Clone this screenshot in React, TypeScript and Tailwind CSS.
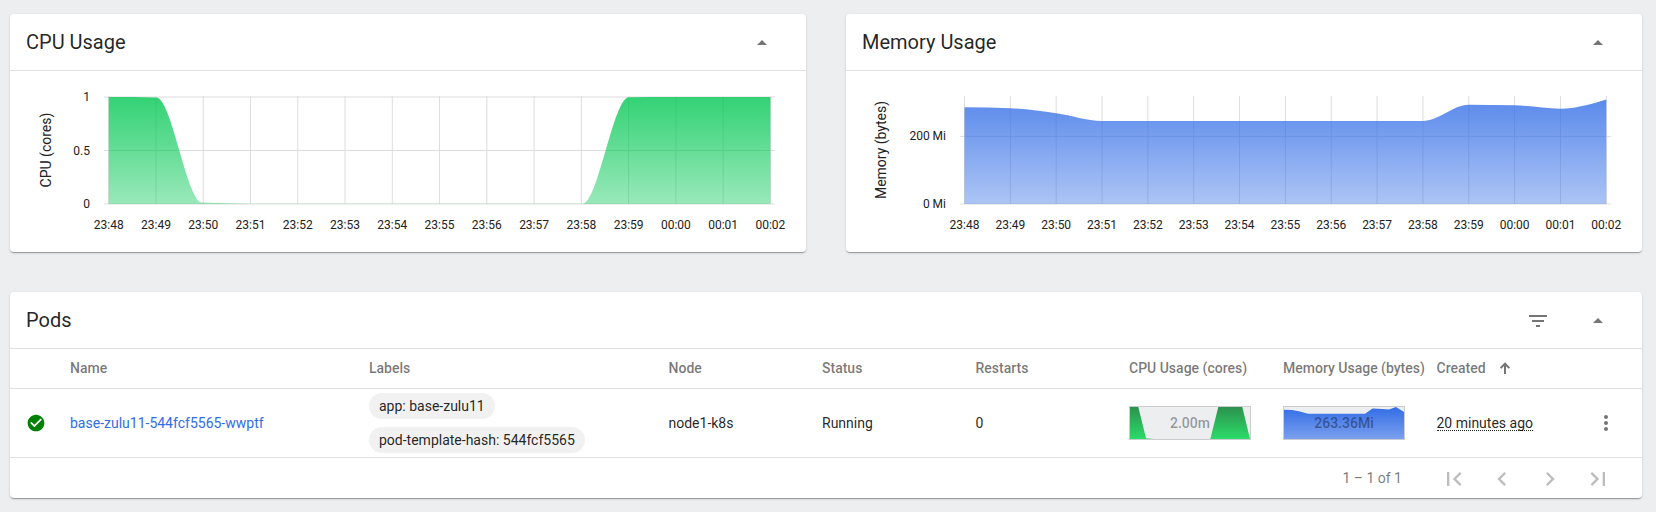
import type { ReactNode } from "react";

type Point = [number, number];

const TIMES = [
  "23:48", "23:49", "23:50", "23:51", "23:52", "23:53", "23:54", "23:55",
  "23:56", "23:57", "23:58", "23:59", "00:00", "00:01", "00:02",
];

/** Monotone cubic interpolation through the given points. */
function monotonePath(points: Point[]): string {
  const n = points.length;
  const slopes: number[] = [];
  for (let i = 0; i < n - 1; i++) {
    slopes.push((points[i + 1][1] - points[i][1]) / (points[i + 1][0] - points[i][0]));
  }
  const tangents = points.map((_, i) => {
    if (i === 0 || i === n - 1) return 0;
    const h0 = points[i][0] - points[i - 1][0];
    const h1 = points[i + 1][0] - points[i][0];
    const s0 = slopes[i - 1];
    const s1 = slopes[i];
    const p = (s0 * h1 + s1 * h0) / (h0 + h1);
    return (Math.sign(s0) + Math.sign(s1)) * Math.min(Math.abs(s0), Math.abs(s1), 0.5 * Math.abs(p));
  });
  tangents[0] = (3 * slopes[0] - tangents[1]) / 2;
  tangents[n - 1] = (3 * slopes[n - 2] - tangents[n - 2]) / 2;
  let d = `M${points[0][0]},${points[0][1]}`;
  for (let i = 0; i < n - 1; i++) {
    const [x0, y0] = points[i];
    const [x1, y1] = points[i + 1];
    const dx = (x1 - x0) / 3;
    d += `C${x0 + dx},${y0 + dx * tangents[i]},${x1 - dx},${y1 - dx * tangents[i + 1]},${x1},${y1}`;
  }
  return d;
}

function Icon({ path, size = 24 }: { path: string; size?: number }) {
  return (
    <svg width={size} height={size} viewBox="0 0 24 24" fill="currentColor" className="block shrink-0">
      <path d={path} />
    </svg>
  );
}

const ICONS = {
  dropUp: "M7 14l5-5 5 5z",
  filter: "M10 18h4v-2h-4v2zM3 6v2h18V6H3zm3 7h12v-2H6v2z",
  check:
    "M12 2C6.48 2 2 6.48 2 12s4.48 10 10 10 10-4.48 10-10S17.52 2 12 2zm-2 15l-5-5 1.41-1.41L10 14.17l7.59-7.59L19 8l-9 9z",
  more:
    "M12 8c1.1 0 2-.9 2-2s-.9-2-2-2-2 .9-2 2 .9 2 2 2zm0 2c-1.1 0-2 .9-2 2s.9 2 2 2 2-.9 2-2-.9-2-2-2zm0 6c-1.1 0-2 .9-2 2s.9 2 2 2 2-.9 2-2-.9-2-2-2z",
  first: "M18.41 16.59L13.82 12l4.59-4.59L17 6l-6 6 6 6zM6 6h2v12H6z",
  prev: "M15.41 7.41L14 6l-6 6 6 6 1.41-1.41L10.83 12z",
  next: "M10 6L8.59 7.41 13.17 12l-4.58 4.59L10 18l6-6z",
  last: "M5.59 7.41L10.18 12l-4.59 4.59L7 18l6-6-6-6zM16 6h2v12h-2z",
};

function Card({ title, actions, children }: { title: string; actions?: ReactNode; children: ReactNode }) {
  return (
    <section className="flex flex-col rounded-[4px] bg-white shadow-[0_2px_1px_-1px_rgba(0,0,0,0.2),0_1px_1px_0_rgba(0,0,0,0.14),0_1px_3px_0_rgba(0,0,0,0.12)]">
      <header className="flex h-[57px] items-center justify-between border-b border-[#dfdfdf] pl-4 pr-8">
        <h2 className="text-xl leading-7">{title}</h2>
        <div className="flex gap-9 pt-0.5 text-black/54">
          {actions}
          <Icon path={ICONS.dropUp} />
        </div>
      </header>
      {children}
    </section>
  );
}

interface ChartProps {
  id: string;
  label: string;
  labelX: number;
  color: string;
  start: number;
  end: number;
  gridStart: number;
  gridEnd: number;
  ticks: { y: number; text: string }[];
  points: Point[];
}

function AreaChart({ id, label, labelX, color, start, end, gridStart, gridEnd, ticks, points }: ChartProps) {
  const step = (end - start) / (TIMES.length - 1);
  const bottom = 133;
  return (
    <svg width="796" height="181" viewBox="0 0 796 181" className="block fill-[#212121] text-[12px]">
      <defs>
        <linearGradient id={id} x1="0" y1="0" x2="0" y2="1">
          <stop offset="0" stopColor={color} stopOpacity="0.8" />
          <stop offset="1" stopColor={color} stopOpacity="0.4" />
        </linearGradient>
      </defs>
      <g stroke="#dddddd">
        {ticks.map((t) => (
          <line key={t.text} x1={gridStart} x2={gridEnd} y1={t.y} y2={t.y} />
        ))}
        {TIMES.map((t, i) => (
          <line key={t} x1={start + i * step} x2={start + i * step} y1="25" y2={bottom} />
        ))}
      </g>
      <path d={`${monotonePath(points)}L${end},${bottom}L${start},${bottom}Z`} fill={`url(#${id})`} />
      {ticks.map((t) => (
        <text key={t.text} x={gridStart - 14} y={t.y + 4} textAnchor="end">
          {t.text}
        </text>
      ))}
      {TIMES.map((t, i) => (
        <text key={t} x={start + i * step} y="158" textAnchor="middle">
          {t}
        </text>
      ))}
      <text transform={`translate(${labelX},79) rotate(-90)`} textAnchor="middle" className="text-[14px]">
        {label}
      </text>
    </svg>
  );
}

function Sparkline({ id, from, to, d, text }: { id: string; from: string; to: string; d: string; text: string }) {
  return (
    <div className="relative h-[34px] w-[122px] border border-[#cbcccd] bg-[#edeef0]">
      <svg width="120" height="32" viewBox="0 0 120 32" className="block">
        <defs>
          <linearGradient id={id} x1="0" y1="0" x2="0" y2="1">
            <stop offset="0" stopColor={from} />
            <stop offset="1" stopColor={to} />
          </linearGradient>
        </defs>
        <path d={d} fill={`url(#${id})`} />
      </svg>
      <span className="absolute inset-0 flex items-center justify-center font-medium text-black/38">{text}</span>
    </div>
  );
}

function Chip({ children }: { children: ReactNode }) {
  return <span className="flex h-[26px] items-center rounded-full bg-[#f1f1f1] px-2.5">{children}</span>;
}

const ROW = "grid grid-cols-[60px_299px_299.5px_153.5px_153.5px_153.5px_154px_153.5px_1fr] items-center";

const CPU_POINTS: Point[] = [
  [98.7, 26], [146.4, 26.4], [192.3, 131.6], [240, 132.7], [287, 132.8], [572.3, 132.8],
  [618.8, 26.3], [666, 26], [760.4, 26],
];

const MEMORY_POINTS: Point[] = [
  [118.5, 36.3], [164.3, 37.3], [210.2, 42.3], [256, 50], [302, 50], [576.8, 50],
  [622.7, 33.7], [668.5, 34.3], [714.4, 37.7], [760.3, 28.5],
];

export default function App() {
  return (
    <main className="flex h-[512px] flex-col gap-10 bg-[#edeef0] pl-2.5 pr-3.5 pt-3.5 font-['Roboto',sans-serif] text-sm text-black/87">
      <div className="grid grid-cols-2 gap-10">
        <Card title="CPU Usage">
          <AreaChart
            id="cpu"
            label="CPU (cores)"
            labelX={41}
            color="#00c752"
            start={98.7}
            end={760.4}
            gridStart={94}
            gridEnd={765}
            ticks={[{ y: 26, text: "1" }, { y: 79.5, text: "0.5" }, { y: 133, text: "0" }]}
            points={CPU_POINTS}
          />
        </Card>
        <Card title="Memory Usage">
          <AreaChart
            id="memory"
            label="Memory (bytes)"
            labelX={40}
            color="#326de6"
            start={118.5}
            end={760.3}
            gridStart={114}
            gridEnd={765}
            ticks={[{ y: 65.4, text: "200 Mi" }, { y: 133, text: "0 Mi" }]}
            points={MEMORY_POINTS}
          />
        </Card>
      </div>

      <Card title="Pods" actions={<Icon path={ICONS.filter} />}>
        <div className={`${ROW} h-10 border-b border-[#dfdfdf] pb-px font-medium text-black/54`}>
          <span />
          <span>Name</span>
          <span>Labels</span>
          <span>Node</span>
          <span>Status</span>
          <span>Restarts</span>
          <span className="whitespace-nowrap">CPU Usage (cores)</span>
          <span className="whitespace-nowrap">Memory Usage (bytes)</span>
          <span className="flex items-center gap-[13px]">
            Created
            <svg width="12" height="12" viewBox="0 0 12 12" className="block" fill="none" stroke="currentColor" strokeWidth="2">
              <path d="M6 12V2M1.6 6.1L6 1.7L10.4 6.1" />
            </svg>
          </span>
        </div>
        <div className={`${ROW} h-[69px] border-b border-[#dfdfdf]`}>
          <span className="pl-4 text-[#008000]">
            <Icon path={ICONS.check} size={20} />
          </span>
          <a className="text-[#326de6]">base-zulu11-544fcf5565-wwptf</a>
          <div className="flex flex-col items-start gap-2">
            <Chip>app: base-zulu11</Chip>
            <Chip>pod-template-hash: 544fcf5565</Chip>
          </div>
          <span>node1-k8s</span>
          <span>Running</span>
          <span>0</span>
          <Sparkline
            id="cpu-spark"
            from="#2c924e"
            to="#2bdb69"
            text="2.00m"
            d="M0 0H8.3L16 31.2L24 32H0ZM80.3 32L88.3 0H112.3L120 32Z"
          />
          <Sparkline
            id="memory-spark"
            from="#326de6"
            to="#7ba0ee"
            text="263.36Mi"
            d="M0 2.8L8 3L16 4.4L24 6.7H81L88.5 1.5L98 1.9L105 2.6L112 0L120 5V32H0Z"
          />
          <div className="flex items-center justify-between pr-6">
            <span className="border-b border-dotted border-black/87 leading-[14px]">20 minutes ago</span>
            <span className="text-black/54">
              <Icon path={ICONS.more} />
            </span>
          </div>
        </div>
        <footer className="flex h-10 items-center justify-end pr-[30px] text-black/54">
          <span className="pr-[38px]">1 – 1 of 1</span>
          <div className="flex gap-5 pt-0.5 text-black/26">
            <Icon path={ICONS.first} size={28} />
            <Icon path={ICONS.prev} size={28} />
            <Icon path={ICONS.next} size={28} />
            <Icon path={ICONS.last} size={28} />
          </div>
        </footer>
      </Card>
    </main>
  );
}
